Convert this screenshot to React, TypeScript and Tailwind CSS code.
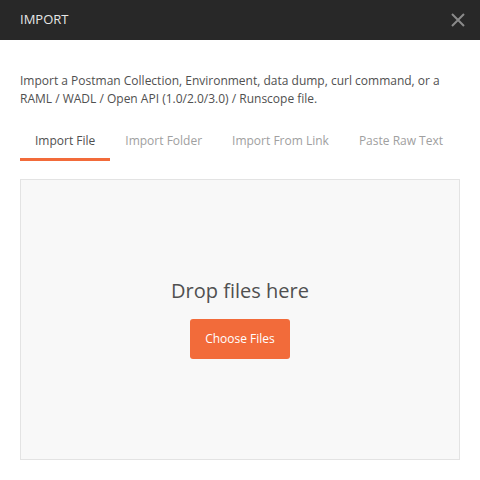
import React from "react";

const tabs = ["Import File", "Import Folder", "Import From Link", "Paste Raw Text"];

export default function App() {
  return (
    <div className="w-[480px] h-[480px] bg-white flex flex-col font-['Open_Sans',sans-serif]">
      <div className="h-10 bg-[#282828] flex items-center justify-between px-5 shrink-0">
        <span className="text-[13px] text-[#e6e6e6]">IMPORT</span>
        <svg width="14" height="14" viewBox="0 0 14 14" className="mr-[-5px]">
          <path d="M1 1L13 13M13 1L1 13" stroke="#8a8a8a" strokeWidth="2" />
        </svg>
      </div>
      <div className="flex-1 flex flex-col px-5 pt-[32px] pb-5">
        <p className="text-[12px] leading-[18px] text-[#505050]">
          Import a Postman Collection, Environment, data dump, curl command, or a RAML / WADL / Open API (1.0/2.0/3.0) / Runscope file.
        </p>
        <div className="flex mt-[24px]">
          {tabs.map((t, i) => (
            <div
              key={t}
              className={
                i === 0
                  ? "px-[15px] pb-[8px] text-[12px] leading-[18px] text-[#505050] border-b-[3px] border-[#f26b3a]"
                  : "px-[15px] pb-[8px] text-[12px] leading-[18px] text-[#a0a0a0] border-b-[3px] border-transparent"
              }
            >
              {t}
            </div>
          ))}
        </div>
        <div className="mt-[18px] flex-1 border border-[#e3e3e3] bg-[#f8f8f8] flex flex-col items-center justify-center">
          <div className="text-[20px] leading-[24px] text-[#505050] -mt-[2px]">Drop files here</div>
          <button className="mt-[16px] w-[100px] h-[40px] rounded-[3px] bg-[#f26b3a] text-white text-[12px]">
            Choose Files
          </button>
        </div>
      </div>
    </div>
  );
}
